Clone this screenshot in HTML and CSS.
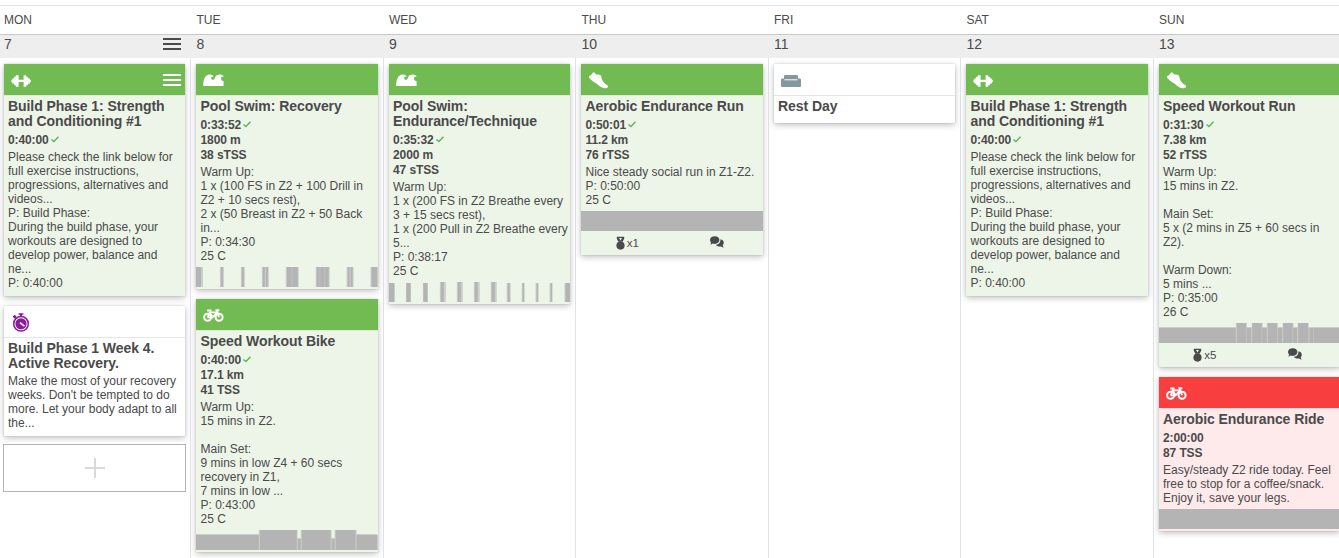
FILE: index.html
```
<!DOCTYPE html>
<html lang="en">
<head>
    <meta charset="UTF-8">
    <meta name="viewport" content="width=device-width, initial-scale=1.0">
    <title>Training Calendar</title>
    <link rel="stylesheet" href="styles.css">
</head>
<body>

    <!-- Icon set -->
    <svg class="sprite">
        <symbol id="dumbbell" viewBox="0 0 20 12">
            <path d="M0 6 L2 3.2 L3.2 3.2 L3.2 1.8 L4.8 1.8 L4.8 0.2 L7.6 0.2 L7.6 4.8 L12.6 4.8 L12.6 0.2 L15.2 0.2 L15.2 1.8 L16.8 1.8 L16.8 3.2 L18.2 3.2 L20.2 6 L18.2 8.8 L16.8 8.8 L16.8 10.2 L15.2 10.2 L15.2 11.8 L12.6 11.8 L12.6 7 L7.6 7 L7.6 11.8 L4.8 11.8 L4.8 10.2 L3.2 10.2 L3.2 8.8 L2 8.8 Z"/>
        </symbol>
        <symbol id="waves" viewBox="0 0 21 12">
            <path d="M0.2 12 C0.2 6 1.6 0.8 6.4 0.4 C8.6 0.2 10.4 1.4 10.6 3 C9.4 2.2 8 2.8 8.2 4.4 C8.4 6 10.4 6.4 11.4 5 C12 2.4 13.6 0.5 16.4 0.4 C18.6 0.2 20.4 1.4 20.6 3 C19.4 2.2 17.9 2.8 18 4.5 C18.2 6.2 19.4 7 20.6 7.2 L20.6 12 Z"/>
        </symbol>
        <symbol id="bike" viewBox="0 0 21 13">
            <g fill="none" stroke="currentColor">
                <circle cx="4.6" cy="8.3" r="3.5" stroke-width="2"/>
                <circle cx="16.1" cy="8.3" r="3.5" stroke-width="2"/>
                <path d="M4.6 8.3 L7 3.4 L14 3.4 L9.8 8.3 L6.2 3 M9.8 8.3 H4.6 M16.1 8.3 L13.4 1.1 H16.4" stroke-width="1.8"/>
                <path d="M4.2 1.5 H8.6" stroke-width="2"/>
            </g>
        </symbol>
        <symbol id="shoe" viewBox="0 0 20 17">
            <path d="M0.3 3.9 C1.8 3.6 3 2.4 3.8 0.8 C4.3 0 5.2 0.1 5.8 0.9 L7.2 2.6 C8.6 2.2 10.6 2.4 12 3.6 C12.4 6 13.2 8.4 14.4 10 C15.6 11.6 17 12.4 18.4 13.2 C19.4 14 19.2 15.4 17.8 15.9 C15.6 16.5 13.2 16.1 11.4 14.8 L7.4 11.4 L4 9.4 L1 6.8 C0 6 -0.2 4.8 0.3 3.9 Z"/>
        </symbol>
        <symbol id="sofa" viewBox="0 0 20 12">
            <path d="M3 3.4 V1.4 Q3 0 4.4 0 H15.6 Q17 0 17 1.4 V3.4 H18.6 Q20 3.4 20 4.8 V10.8 Q20 12 18.8 12 H1.2 Q0 12 0 10.8 V4.8 Q0 3.4 1.4 3.4 Z"/>
            <path d="M3.4 4.8 H16.6" stroke="#fff" stroke-width="1"/>
        </symbol>
        <symbol id="stopwatch" viewBox="0 0 18 19">
            <path d="M6.6 0.2 H11.4 V1.8 H6.6 Z M8 1.8 H10 V3.4 H8 Z M0.6 3.6 L2.8 1.8 L4.8 4 L2.8 5.8 Z"/>
            <circle cx="9" cy="10.8" r="7.3" fill="none" stroke="currentColor" stroke-width="1.5"/>
            <circle cx="9" cy="10.8" r="5.6"/>
            <path d="M8 9.6 L12.4 13.2" stroke="#fff" stroke-width="1.5"/>
        </symbol>
        <symbol id="medal" viewBox="0 0 9 14">
            <circle cx="4.5" cy="9.6" r="4.1"/>
            <path d="M0.8 0.8 H8.2 V2.8 L6.6 5.8 H2.4 L0.8 2.8 Z"/>
            <path d="M3 2 H6 L4.5 4.4 Z" fill="#edf5e8"/>
        </symbol>
        <symbol id="chat" viewBox="0 0 14 12">
            <path d="M4.7 0.2 C7.6 0.2 9.4 1.8 9.4 4.1 C9.4 6.4 7.4 8 4.7 8 C3.9 8 3.2 7.9 2.6 7.6 C1.9 8.2 1.1 8.4 0.2 8.4 C0.8 7.8 1 7.1 1 6.4 C0.3 5.8 0 5 0 4.1 C0 1.8 1.8 0.2 4.7 0.2 Z"/>
            <path d="M10.4 3.2 C12.6 3.6 13.8 4.9 13.8 6.8 C13.8 7.8 13.4 8.6 12.8 9.2 C12.8 10 13.2 10.7 13.8 11.4 C12.7 11.4 11.8 11.1 11 10.5 C8.7 10.9 6.7 10.2 5.7 8.8 C8.6 8.6 10.7 6.6 10.4 3.2 Z"/>
        </symbol>
        <symbol id="check" viewBox="0 0 8 7">
            <path d="M0.5 3.4 L2.9 5.6 L7.5 0.8" fill="none" stroke="currentColor" stroke-width="1.4"/>
        </symbol>
        <symbol id="menu" viewBox="0 0 18 12">
            <path d="M0 0 H18 V2 H0 Z M0 5 H18 V7 H0 Z M0 10 H18 V12 H0 Z"/>
        </symbol>
    </svg>

    <div class="week-header">
        <span>MON</span>
        <span>TUE</span>
        <span>WED</span>
        <span>THU</span>
        <span>FRI</span>
        <span>SAT</span>
        <span>SUN</span>
    </div>

    <div class="week-dates">
        <span>7 <svg class="menu-icon"><use href="#menu"/></svg></span>
        <span>8</span>
        <span>9</span>
        <span>10</span>
        <span>11</span>
        <span>12</span>
        <span>13</span>
    </div>

    <div class="week">

        <!-- Monday -->
        <div class="day">
            <div class="card done">
                <div class="card-top">
                    <svg class="icon dumbbell"><use href="#dumbbell"/></svg>
                    <svg class="menu-icon"><use href="#menu"/></svg>
                </div>
                <div class="card-body">
                    <h3>Build Phase 1: Strength
and Conditioning #1</h3>
                    <div class="stats"><div>0:40:00<svg class="check"><use href="#check"/></svg></div></div>
                    <p>Please check the link below for
full exercise instructions,
progressions, alternatives and
videos...
P: Build Phase:
During the build phase, your
workouts are designed to
develop power, balance and
ne...
P: 0:40:00</p>
                </div>
            </div>
            <div class="card">
                <div class="card-top">
                    <svg class="icon stopwatch"><use href="#stopwatch"/></svg>
                </div>
                <div class="card-body">
                    <h3>Build Phase 1 Week 4.
Active Recovery.</h3>
                    <p>Make the most of your recovery
weeks. Don't be tempted to do
more. Let your body adapt to all
the...</p>
                </div>
            </div>
            <div class="add-card"></div>
        </div>

        <!-- Tuesday -->
        <div class="day">
            <div class="card done">
                <div class="card-top">
                    <svg class="icon waves"><use href="#waves"/></svg>
                </div>
                <div class="card-body">
                    <h3>Pool Swim: Recovery</h3>
                    <div class="stats">
                        <div>0:33:52<svg class="check"><use href="#check"/></svg></div>
                        <div>1800 m</div>
                        <div>38 sTSS</div>
                    </div>
                    <p>Warm Up:
1 x (100 FS in Z2 + 100 Drill in
Z2 + 10 secs rest),
2 x (50 Breast in Z2 + 50 Back
in...
P: 0:34:30
25 C</p>
                </div>
                <svg class="chart" viewBox="0 0 182 20" preserveAspectRatio="none">
                    <path class="edge" d="M0 0H7V20H0Z M24 0H28V20H24Z M45 0H49V20H45Z M66 0H73V20H66Z M90 0H103V20H90Z M120 0H134V20H120Z M151 0H158V20H151Z M175 0H182V20H175Z"/>
                    <path d="M0 0H5V20H0Z M25 0H27V20H25Z M46 0H48V20H46Z M67 0H69V20H67Z M70 0H72V20H70Z M91 0H96V20H91Z M96.5 0H102V20H96.5Z M121 0H124V20H121Z M124.5 0H129V20H124.5Z M129.5 0H133V20H129.5Z M152 0H154V20H152Z M155 0H157V20H155Z M176 0H182V20H176Z"/>
                </svg>
            </div>
            <div class="card done">
                <div class="card-top">
                    <svg class="icon bike"><use href="#bike"/></svg>
                </div>
                <div class="card-body">
                    <h3>Speed Workout Bike</h3>
                    <div class="stats">
                        <div>0:40:00<svg class="check"><use href="#check"/></svg></div>
                        <div>17.1 km</div>
                        <div>41 TSS</div>
                    </div>
                    <p>Warm Up:
15 mins in Z2.

Main Set:
9 mins in low Z4 + 60 secs
recovery in Z1,
7 mins in low ...
P: 0:43:00
25 C</p>
                </div>
                <svg class="chart" viewBox="0 0 182 20" preserveAspectRatio="none">
                    <path class="edge" d="M0 4H63V0H102V8H105V0H136V8H139V0H161V4H182V20H0Z"/>
                    <path d="M0 5H63V20H0Z M64 0H101V20H64Z M102 9H105V20H102Z M106 0H135V20H106Z M136 9H139V20H136Z M140 0H160V20H140Z M161 5H182V20H161Z"/>
                </svg>
            </div>
        </div>

        <!-- Wednesday -->
        <div class="day">
            <div class="card done">
                <div class="card-top">
                    <svg class="icon waves"><use href="#waves"/></svg>
                </div>
                <div class="card-body">
                    <h3>Pool Swim:
Endurance/Technique</h3>
                    <div class="stats">
                        <div>0:35:32<svg class="check"><use href="#check"/></svg></div>
                        <div>2000 m</div>
                        <div>47 sTSS</div>
                    </div>
                    <p>Warm Up:
1 x (200 FS in Z2 Breathe every
3 + 15 secs rest),
1 x (200 Pull in Z2 Breathe every
5...
P: 0:38:17
25 C</p>
                </div>
                <svg class="chart" viewBox="0 0 182 20" preserveAspectRatio="none">
                    <path class="edge" d="M0 1H6V20H0Z M17 1H22V20H17Z M34 1H39V20H34Z M51 0H57V20H51Z M68 0H74V20H68Z M85 0H91V20H85Z M102 0H108V20H102Z M118 1H122V20H118Z M133 1H136V20H133Z M147 1H150V20H147Z M161 1H164V20H161Z M176 1H182V20H176Z"/>
                    <path d="M0 1H5V20H0Z M17.5 1H21.5V20H17.5Z M34.5 1H38.5V20H34.5Z M52 0H55V20H52Z M69 0H72V20H69Z M86 0H89V20H86Z M103 0H106V20H103Z M119 1H121V20H119Z M134 1H135.5V20H134Z M148 1H149.5V20H148Z M162 1H163.5V20H162Z M177 1H182V20H177Z"/>
                </svg>
            </div>
        </div>

        <!-- Thursday -->
        <div class="day">
            <div class="card done">
                <div class="card-top">
                    <svg class="icon shoe"><use href="#shoe"/></svg>
                </div>
                <div class="card-body">
                    <h3>Aerobic Endurance Run</h3>
                    <div class="stats">
                        <div>0:50:01<svg class="check"><use href="#check"/></svg></div>
                        <div>11.2 km</div>
                        <div>76 rTSS</div>
                    </div>
                    <p>Nice steady social run in Z1-Z2.
P: 0:50:00
25 C</p>
                </div>
                <div class="chart solid"></div>
                <div class="card-footer">
                    <span><svg class="medal"><use href="#medal"/></svg>x1</span>
                    <span><svg class="chat"><use href="#chat"/></svg></span>
                </div>
            </div>
        </div>

        <!-- Friday -->
        <div class="day">
            <div class="card">
                <div class="card-top">
                    <svg class="icon sofa"><use href="#sofa"/></svg>
                </div>
                <div class="card-body">
                    <h3>Rest Day</h3>
                    <p></p>
                </div>
            </div>
        </div>

        <!-- Saturday -->
        <div class="day">
            <div class="card done">
                <div class="card-top">
                    <svg class="icon dumbbell"><use href="#dumbbell"/></svg>
                </div>
                <div class="card-body">
                    <h3>Build Phase 1: Strength
and Conditioning #1</h3>
                    <div class="stats"><div>0:40:00<svg class="check"><use href="#check"/></svg></div></div>
                    <p>Please check the link below for
full exercise instructions,
progressions, alternatives and
videos...
P: Build Phase:
During the build phase, your
workouts are designed to
develop power, balance and
ne...
P: 0:40:00</p>
                </div>
            </div>
        </div>

        <!-- Sunday -->
        <div class="day">
            <div class="card done">
                <div class="card-top">
                    <svg class="icon shoe"><use href="#shoe"/></svg>
                </div>
                <div class="card-body">
                    <h3>Speed Workout Run</h3>
                    <div class="stats">
                        <div>0:31:30<svg class="check"><use href="#check"/></svg></div>
                        <div>7.38 km</div>
                        <div>52 rTSS</div>
                    </div>
                    <p>Warm Up:
15 mins in Z2.

Main Set:
5 x (2 mins in Z5 + 60 secs in
Z2).

Warm Down:
5 mins ...
P: 0:35:00
26 C</p>
                </div>
                <svg class="chart" viewBox="0 0 182 20" preserveAspectRatio="none">
                    <path class="edge" d="M0 4H77V0H88V4H93V0H104V4H108V0H119V4H124V0H135V4H139V0H150V4H182V20H0Z"/>
                    <path d="M0 5H77V20H0Z M78 0H87.5V20H78Z M88 5H92.5V20H88Z M93.5 0H103V20H93.5Z M103.5 5H108V20H103.5Z M109 0H118.5V20H109Z M119 5H123.5V20H119Z M124.5 0H134V20H124.5Z M134.5 5H138.5V20H134.5Z M139.5 0H149.5V20H139.5Z M150 5H151V20H150Z M151.5 5H155V20H151.5Z M155.5 5H182V20H155.5Z"/>
                </svg>
                <div class="card-footer">
                    <span><svg class="medal"><use href="#medal"/></svg>x5</span>
                    <span><svg class="chat"><use href="#chat"/></svg></span>
                </div>
            </div>
            <div class="card missed">
                <div class="card-top">
                    <svg class="icon bike"><use href="#bike"/></svg>
                </div>
                <div class="card-body">
                    <h3>Aerobic Endurance Ride</h3>
                    <div class="stats">
                        <div>2:00:00</div>
                        <div>87 TSS</div>
                    </div>
                    <p>Easy/steady Z2 ride today. Feel
free to stop for a coffee/snack.
Enjoy it, save your legs.</p>
                </div>
                <div class="chart solid"></div>
            </div>
        </div>

    </div>

</body>
</html>
```
FILE: styles.css
```
/* General Styles */
* {
    box-sizing: border-box;
}

body {
    margin: 0;
    height: 558px;
    overflow: hidden;
    background: #fff;
    color: #4a4a4a;
    font-family: "Liberation Sans", Arial, sans-serif;
    display: flex;
    flex-direction: column;
}

svg {
    display: block;
    fill: currentColor;
}

.sprite {
    display: none;
}

/* Week Header */
.week-header, .week-dates, .week {
    display: grid;
    grid-template-columns: repeat(7, 192.5px);
    margin-left: -1.5px;
    flex: none;
}

.week-header {
    margin-top: 5px;
    height: 30px;
    border-top: 1px solid #e1e5f0;
    border-bottom: 1px solid #c8cac8;
    font-size: 12px;
    line-height: 28px;
}

.week-dates {
    height: 23px;
    background: #eee;
    font-size: 14px;
    line-height: 19px;
}

.week-header span, .week-dates span {
    padding-left: 5.5px;
}

.week-dates span {
    display: flex;
    justify-content: space-between;
    padding-right: 10px;
}

.menu-icon {
    width: 18px;
    height: 12px;
}

.week-dates .menu-icon {
    margin-top: 3px;
}

/* Days */
.week {
    flex: 1;
}

.day {
    padding: 6px 5px 0;
    border-right: 1px solid #dfe3ec;
    display: flex;
    flex-direction: column;
    gap: 10px;
}

/* Cards */
.card {
    background: #fff;
    border-radius: 1px;
    box-shadow: 0 0 0 1px rgba(0, 0, 0, 0.04), 0 2px 6px rgba(0, 0, 0, 0.25);
}

.card-top {
    height: 32px;
    padding: 1px 4px 0 7px;
    border-bottom: 1px solid #e6e6e6;
    display: flex;
    align-items: center;
    justify-content: space-between;
}

.done {
    background: #edf5e8;
}

.done .card-top {
    background: #72bb53;
    background-clip: padding-box;
    border-color: #dcebd3;
    color: #fff;
}

.missed {
    background: #feeaea;
}

.missed .card-top {
    background: #f83e3e;
    background-clip: padding-box;
    border-color: #f3dcdc;
    color: #fff;
}

.card-body {
    padding: 3px 0 6px 4.5px;
    white-space: pre;
}

.card-body:not(:last-child) {
    padding-bottom: 4px;
}

/* keep indentation between the blocks from rendering as lines */
.card-body, .stats {
    display: flex;
    flex-direction: column;
}

h3 {
    margin: 0;
    font-size: 14px;
    line-height: 15px;
    letter-spacing: -0.06px;
}

.stats {
    margin-top: 4px;
    font-size: 12px;
    font-weight: bold;
    line-height: 15px;
    letter-spacing: -0.1px;
}

.stats div {
    display: flex;
}

p {
    margin: 3px 0 0;
    font-size: 12px;
    line-height: 14px;
}

.stats + p {
    margin-top: 2px;
}

.check {
    width: 8px;
    height: 7px;
    margin: 3px 0 0 2px;
    color: #5cb651;
}

/* Workout Charts */
.chart {
    width: 100%;
    height: 20px;
    fill: #b4b4b4;
}

.chart:last-child {
    margin-bottom: 2px;
}

.chart .edge {
    fill: #cbcfc9;
}

.solid {
    background: #b4b4b4;
}

/* Card Footer */
.card-footer {
    height: 24px;
    display: grid;
    grid-template-columns: 1fr 1fr;
    font-size: 11.5px;
    line-height: 24px;
}

.card-footer span {
    display: flex;
    align-items: center;
    justify-content: center;
    gap: 2px;
}

.card-footer span:first-child {
    padding-left: 2px;
}

.medal {
    width: 9px;
    height: 14px;
}

.chat {
    width: 14px;
    height: 12px;
    margin-bottom: 2px;
}

/* Icons */
.dumbbell {
    width: 20px;
    height: 12px;
    margin-top: 2px;
}

.waves {
    width: 21px;
    height: 12px;
}

.bike {
    width: 21px;
    height: 13px;
}

.shoe {
    width: 20px;
    height: 17px;
    margin-left: 1px;
}

.sofa {
    width: 20px;
    height: 12px;
    margin-top: 2px;
    color: #83989f;
}

.stopwatch {
    width: 18px;
    height: 19px;
    margin-left: 1px;
    color: #8a1a9b;
}

/* Add Button */
.add-card {
    height: 48px;
    margin: -2px -1px 0 -0.5px;
    border: 1px solid #b4b4b4;
    background:
        linear-gradient(#dadada, #dadada) center / 20px 2px no-repeat,
        linear-gradient(#dadada, #dadada) center / 2px 20px no-repeat;
}
```
